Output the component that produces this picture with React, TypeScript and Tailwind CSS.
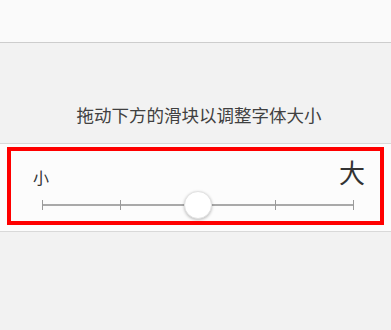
const cjk = { fontFamily: '"Noto Sans CJK SC", "Noto Sans", sans-serif' };

function FontSlider({ value }: { value: number }) {
  const ticks = [0, 1, 2, 3, 4];
  return (
    <div className="relative ml-[42px] mr-[37px] h-[28px]">
      <div className="absolute left-0 right-0 top-[13px] h-[2px] bg-[#a9a9a9]" />
      <div className="absolute inset-0 flex items-center justify-between">
        {ticks.map((t) => (
          <span key={t} className="h-[10px] w-[1px] bg-[#9a9a9a]" />
        ))}
      </div>
      <div
        className="absolute top-0 h-[28px] w-[28px] -translate-x-1/2 rounded-full border border-[#e2e2e2] bg-white shadow-[0_1px_3px_rgba(0,0,0,0.25)]"
        style={{ left: `${(value / 4) * 100}%` }}
      />
    </div>
  );
}

export default function App() {
  return (
    <div className="h-[330px] w-[391px] overflow-hidden bg-[#f2f2f2]" style={cjk}>
      <div className="h-[43px] border-b border-[#cdcdcd] bg-[#fafafa]" />
      <div className="flex h-[100px] items-end justify-center pb-[16px] pl-[7px]">
        <p className="text-[17.5px] leading-[24px] text-[#404040]">拖动下方的滑块以调整字体大小</p>
      </div>
      <section className="relative h-[89px] border-y border-[#d9d9d9] bg-[#fcfcfc]">
        <div className="flex items-end justify-between pl-[33px] pr-[26px] pt-[15px]">
          <span className="text-[16px] leading-[16px] text-[#333]">小</span>
          <span className="text-[26px] leading-[26px] text-[#333]">大</span>
        </div>
        <div className="mt-[6px]">
          <FontSlider value={2} />
        </div>
        <div className="pointer-events-none absolute bottom-[6px] left-[7px] right-[7px] top-[3px] border-[4px] border-[#ff0000]" />
      </section>
    </div>
  );
}
